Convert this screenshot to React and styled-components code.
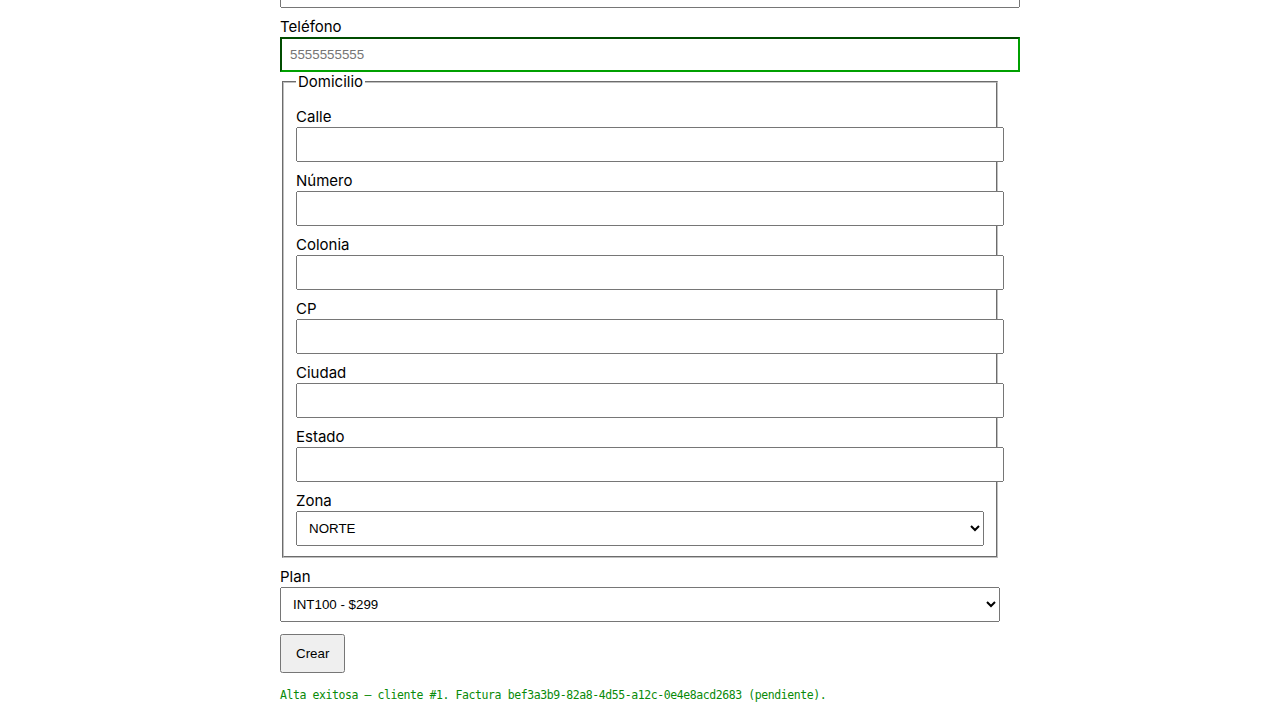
import React from "react";
import styled, { createGlobalStyle } from "styled-components";

const Global = createGlobalStyle`
  html, body { margin: 0; padding: 0; background: #fff; }
  body { font-family: Inter, Roboto, "Liberation Sans", sans-serif; font-size: 15px; color: #000; overflow: hidden; }
`;

const Page = styled.main`
  max-width: 720px;
  margin: -56px auto 0;
`;

const Form = styled.form`
  display: block;
`;

const Label = styled.label`
  display: block;
  margin-top: 8px;
  font-size: 15px;
  line-height: 21px;
`;

const Input = styled.input`
  display: block;
  width: 100%;
  padding: 8px;
  font-family: "Liberation Sans", Arial, sans-serif;
  font-size: 13.333px;
  ${(p) => p.$valid && `border: 2px inset #00a000; outline: none;`}
  &::placeholder { color: #757575; }
`;

const Select = styled.select`
  display: block;
  width: 100%;
  padding: 8px;
  font-family: "Liberation Sans", Arial, sans-serif;
  font-size: 13.333px;
  color: #000;
`;

const Fieldset = styled.fieldset`
  margin: 0 2px;
  padding: 5.6px 12px 10px;
  border: 2px groove #c0c0c0;
  min-width: 0;
`;

const Legend = styled.legend`
  font-size: 15px;
  line-height: 20px;
  padding: 0 2px;
`;

const Button = styled.button`
  display: block;
  margin-top: 12px;
  padding: 10px 14px;
  font-family: "Liberation Sans", Arial, sans-serif;
  font-size: 13.333px;
`;

const Message = styled.p`
  margin: 14px 0 0;
  font-family: "DejaVu Sans Mono", "Liberation Mono", monospace;
  font-size: 11.5px;
  letter-spacing: -0.42px;
  line-height: 16px;
  color: #088a08;
  white-space: pre;
`;

const Field = ({ label, children }) => (
  <>
    <Label>{label}</Label>
    {children}
  </>
);

export default function App() {
  const domicilio = ["Calle", "Número", "Colonia", "CP", "Ciudad", "Estado"];
  return (
    <>
      <Global />
      <Page>
        <Form onSubmit={(e) => e.preventDefault()}>
          <Field label="Correo">
            <Input type="email" />
          </Field>
          <Field label="Teléfono">
            <Input $valid placeholder="5555555555" />
          </Field>
          <Fieldset>
            <Legend>Domicilio</Legend>
            {domicilio.map((l) => (
              <Field key={l} label={l}>
                <Input />
              </Field>
            ))}
            <Field label="Zona">
              <Select defaultValue="NORTE">
                <option>NORTE</option>
                <option>SUR</option>
                <option>ORIENTE</option>
                <option>PONIENTE</option>
              </Select>
            </Field>
          </Fieldset>
          <Field label="Plan">
            <Select defaultValue="INT100">
              <option value="INT100">INT100 - $299</option>
              <option value="INT200">INT200 - $399</option>
            </Select>
          </Field>
          <Button type="submit">Crear</Button>
          <Message>Alta exitosa — cliente #1. Factura bef3a3b9-82a8-4d55-a12c-0e4e8acd2683 (pendiente).</Message>
        </Form>
      </Page>
    </>
  );
}
